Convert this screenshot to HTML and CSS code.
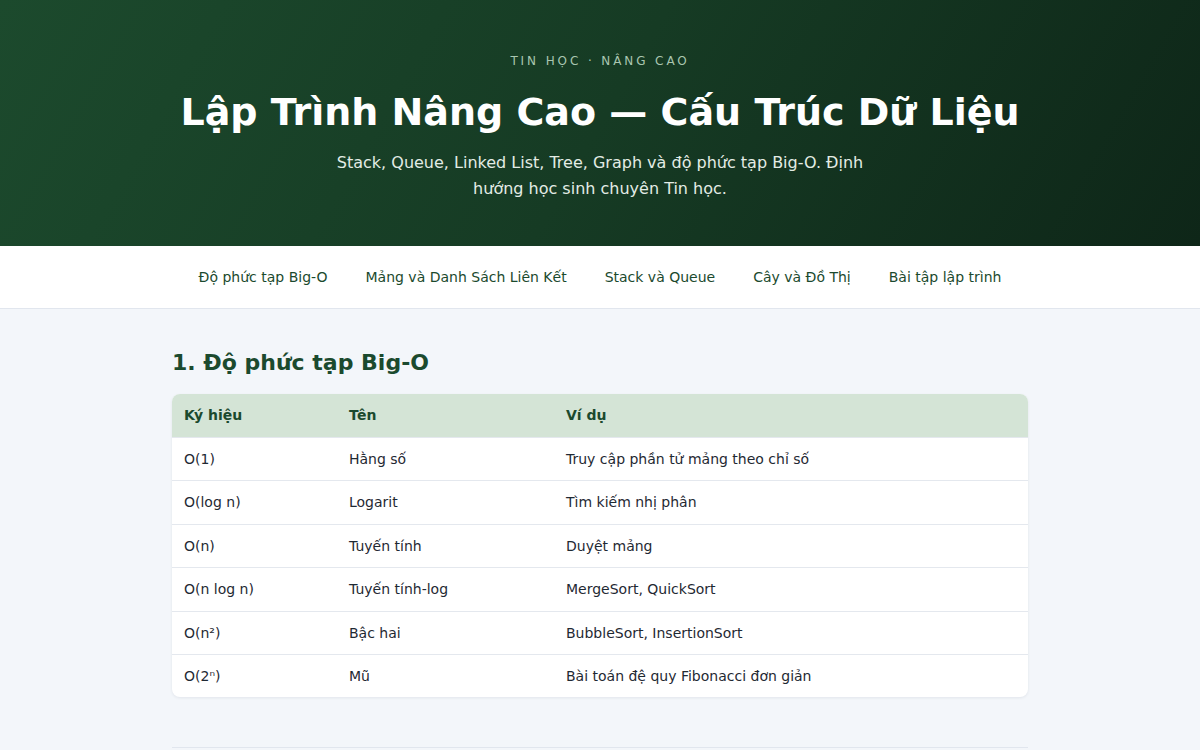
FILE: index.html
```html
<!DOCTYPE html>
<html lang="vi">
<head>
    <meta charset="UTF-8">
    <meta name="viewport" content="width=device-width, initial-scale=1.0">
    <title>Lập Trình Nâng Cao — Cấu Trúc Dữ Liệu</title>
    <link rel="stylesheet" href="styles.css">
</head>
<body>

<header class="hero">
    <p class="eyebrow">Tin học · Nâng cao</p>
    <h1>Lập Trình Nâng Cao — Cấu Trúc Dữ Liệu</h1>
    <p class="lead">Stack, Queue, Linked List, Tree, Graph và độ phức tạp Big-O. Định hướng học sinh chuyên Tin học.</p>
</header>

<nav class="topnav">
    <a href="#big-o">Độ phức tạp Big-O</a>
    <a href="#mang">Mảng và Danh Sách Liên Kết</a>
    <a href="#stack">Stack và Queue</a>
    <a href="#cay">Cây và Đồ Thị</a>
    <a href="#bai-tap">Bài tập lập trình</a>
</nav>

<main class="content">
    <section class="lesson" id="big-o">
        <h2>1. Độ phức tạp Big-O</h2>
        <table class="complexity">
            <thead>
                <tr><th>Ký hiệu</th><th>Tên</th><th>Ví dụ</th></tr>
            </thead>
            <tbody>
                <tr><td>O(1)</td><td>Hằng số</td><td>Truy cập phần tử mảng theo chỉ số</td></tr>
                <tr><td>O(log n)</td><td>Logarit</td><td>Tìm kiếm nhị phân</td></tr>
                <tr><td>O(n)</td><td>Tuyến tính</td><td>Duyệt mảng</td></tr>
                <tr><td>O(n log n)</td><td>Tuyến tính-log</td><td>MergeSort, QuickSort</td></tr>
                <tr><td>O(n²)</td><td>Bậc hai</td><td>BubbleSort, InsertionSort</td></tr>
                <tr><td>O(2ⁿ)</td><td>Mũ</td><td>Bài toán đệ quy Fibonacci đơn giản</td></tr>
            </tbody>
        </table>
    </section>
</main>

</body>
</html>
```

FILE: styles.css
```css
body { margin: 0; background: #f3f6fa; color: #1f2933; font-family: "DejaVu Sans", Verdana, sans-serif; line-height: 1.6; }

.hero { background: linear-gradient(120deg, #1c4a2d 0%, #163b24 50%, #0e2618 100%); color: #fff; text-align: center; padding: 52px 20px 44px; }
.eyebrow { margin: 0; font-size: 12px; letter-spacing: 2.9px; text-transform: uppercase; color: #a9c6b0; }
.hero h1 { margin: 17px 0 12px; font-size: 38px; line-height: 1.3; font-weight: bold; }
.lead { margin: 0 auto; max-width: 560px; font-size: 16px; line-height: 26px; color: #e3ece5; }

.topnav { background: #fff; border-bottom: 1px solid #e1e6ee; display: flex; justify-content: center; gap: 38px; padding: 20px 20px 19px; }
.topnav a { color: #1b4a2e; text-decoration: none; font-size: 14px; line-height: 23px; }
.topnav a:hover { text-decoration: underline; }

.content { max-width: 856px; margin: 0 auto; padding: 37px 20px 0; }
.lesson { padding-bottom: 50px; border-bottom: 1px solid #e1e6ee; margin-bottom: 40px; }
.lesson h2 { margin: 0 0 15px; font-size: 22px; line-height: 1.5; color: #1b4a2e; }

.complexity { width: 100%; border-collapse: collapse; background: #fff; border-radius: 8px; overflow: hidden; box-shadow: 0 1px 3px rgba(20, 40, 60, 0.08); font-size: 14px; }
.complexity th, .complexity td { text-align: left; padding: 10px 12px; }
.complexity th { background: #d4e4d6; color: #1b4a2e; font-weight: bold; padding-bottom: 11px; }
.complexity td { border-top: 1px solid #e4e8ee; }
.complexity th:nth-child(1) { width: 141px; }
.complexity th:nth-child(2) { width: 193px; }
```
